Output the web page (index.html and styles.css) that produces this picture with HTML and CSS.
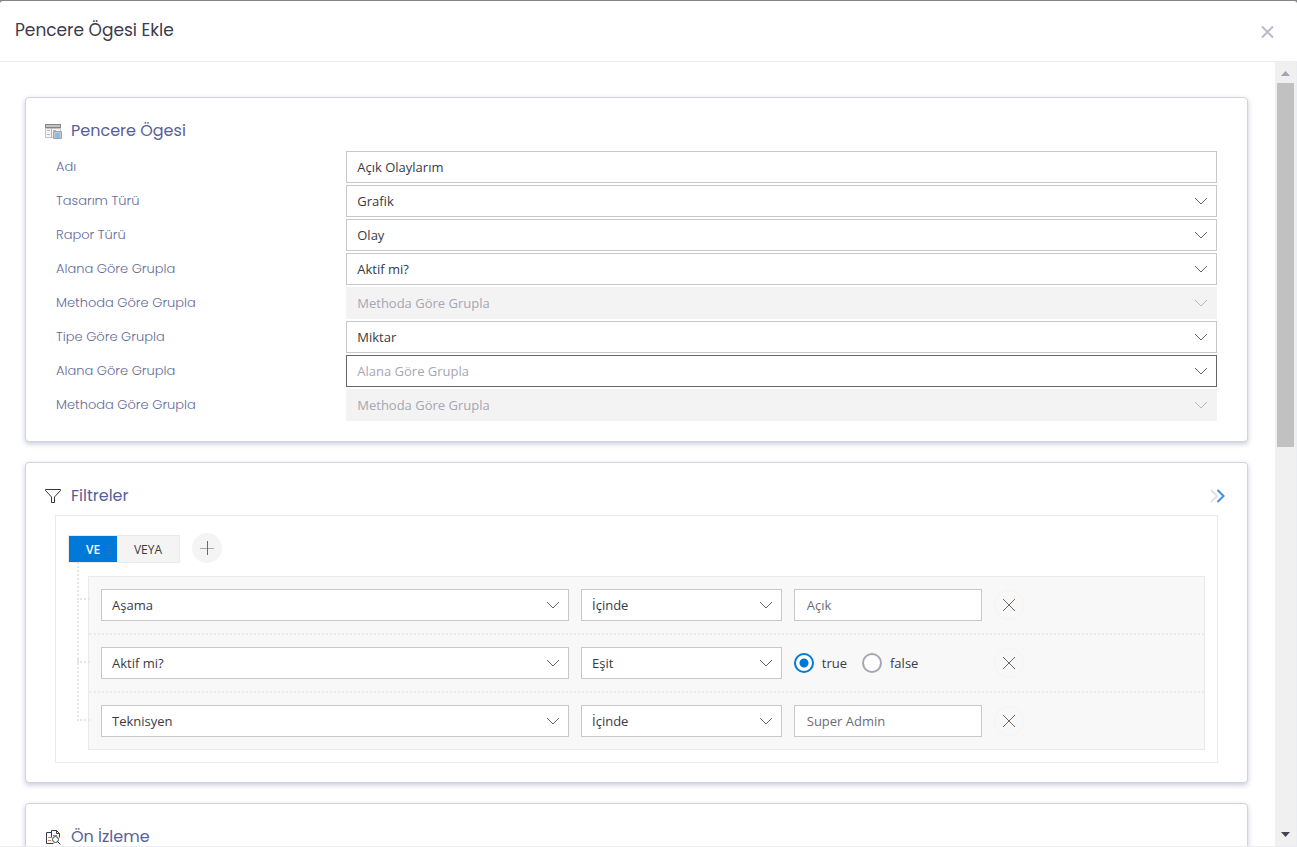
FILE: index.html
```html
<!DOCTYPE html>
<html lang="tr">
<head>
<meta charset="utf-8">
<title>Pencere Ögesi Ekle</title>
<link rel="stylesheet" href="styles.css">
</head>
<body>
<svg class="defs" width="0" height="0" aria-hidden="true">
  <symbol id="chevron" viewBox="0 0 14 8"><path d="M1 1l6 6 6-6" fill="none" stroke="currentColor"/></symbol>
  <symbol id="cross" viewBox="0 0 14 14"><path d="M1 1l12 12M13 1L1 13" fill="none" stroke="currentColor"/></symbol>
</svg>
<div class="dialog" role="dialog" aria-labelledby="dialog-title">
  <header class="dialog-header">
    <h1 class="dialog-title" id="dialog-title">Pencere Ögesi Ekle</h1>
    <button class="close" type="button" aria-label="Kapat"><svg width="13" height="12" viewBox="0 0 13 12"><path d="M1 .5l11 11M12 .5L1 11.500" fill="none" stroke="currentColor" stroke-width="2"/></svg></button>
  </header>
  <div class="dialog-body">
    <main class="content">
      <section class="card">
        <div class="card-head">
          <svg class="card-icon" width="17" height="17" viewBox="0 0 17 17"><path d="M0 1h16v4H0z" fill="#858585"/><path d="M1 2h14v2H1z" fill="#c4c4c4"/><path d="M.5 5.500h15v9H.5z" fill="#f4f4f4" stroke="#c2c2c2"/><path d="M2 7.500h3M2 11.500h3M6.500 6v9M8 7.500h3" stroke="#b4b4b4"/><path d="M8.500 8.500h8v7h-8z" fill="#c9c9c9" stroke="#a3a3a3"/><path d="M10 10h5v5h-5z" fill="#84bdf0"/></svg>
          <h2 class="card-title">Pencere Ögesi</h2>
        </div>
        <div class="form">
          <div class="row"><label for="f1">Adı</label><input class="control" id="f1" type="text" value="Açık Olaylarım"></div>
          <div class="row"><label for="f2">Tasarım Türü</label><div class="pick"><select class="control" id="f2"><option>Grafik</option></select><svg class="chevron"><use href="#chevron"/></svg></div></div>
          <div class="row"><label for="f3">Rapor Türü</label><div class="pick"><select class="control" id="f3"><option>Olay</option></select><svg class="chevron"><use href="#chevron"/></svg></div></div>
          <div class="row"><label for="f4">Alana Göre Grupla</label><div class="pick"><select class="control" id="f4"><option>Aktif mi?</option></select><svg class="chevron"><use href="#chevron"/></svg></div></div>
          <div class="row"><label for="f5">Methoda Göre Grupla</label><div class="pick disabled"><select class="control" id="f5" disabled><option>Methoda Göre Grupla</option></select><svg class="chevron"><use href="#chevron"/></svg></div></div>
          <div class="row"><label for="f6">Tipe Göre Grupla</label><div class="pick"><select class="control" id="f6"><option>Miktar</option></select><svg class="chevron"><use href="#chevron"/></svg></div></div>
          <div class="row"><label for="f7">Alana Göre Grupla</label><div class="pick"><select class="control active" id="f7"><option>Alana Göre Grupla</option></select><svg class="chevron"><use href="#chevron"/></svg></div></div>
          <div class="row"><label for="f8">Methoda Göre Grupla</label><div class="pick disabled"><select class="control" id="f8" disabled><option>Methoda Göre Grupla</option></select><svg class="chevron"><use href="#chevron"/></svg></div></div>
        </div>
      </section>

      <section class="card">
        <div class="card-head">
          <svg class="card-icon" width="17" height="17" viewBox="0 0 17 17"><path d="M.5 1.500h15v1L9.500 9v5.500h-3V9L.5 2.500z" fill="none" stroke="#34343f"/></svg>
          <h2 class="card-title">Filtreler</h2>
          <button class="expand" type="button" aria-label="Genişlet"><svg width="15" height="14" viewBox="0 0 15 14"><path d="M1 1l6 6-6 6" fill="none" stroke="#dfe1ea" stroke-width="2"/><path d="M7.500 1l6 6-6 6" fill="none" stroke="#3f8fda" stroke-width="2"/></svg></button>
        </div>
        <div class="query">
          <div class="query-bar">
            <div class="toggle"><button class="toggle-item on" type="button">VE</button><button class="toggle-item" type="button">VEYA</button></div>
            <button class="round add" type="button" aria-label="Ekle"><svg width="14" height="14" viewBox="0 0 14 14"><path d="M0 7.500h14" stroke="#aaa"/><path d="M7.500 0v14" stroke="#77655b"/></svg></button>
          </div>
          <div class="rules">
            <div class="rule">
              <div class="pick field"><select class="control" aria-label="Alan"><option>Aşama</option></select><svg class="chevron"><use href="#chevron"/></svg></div>
              <div class="pick operator"><select class="control" aria-label="Operatör"><option>İçinde</option></select><svg class="chevron"><use href="#chevron"/></svg></div>
              <input class="control value" type="text" aria-label="Değer" value="Açık">
              <button class="round remove" type="button" aria-label="Sil"><svg width="14" height="14"><use href="#cross"/></svg></button>
            </div>
            <div class="rule">
              <div class="pick field"><select class="control" aria-label="Alan"><option>Aktif mi?</option></select><svg class="chevron"><use href="#chevron"/></svg></div>
              <div class="pick operator"><select class="control" aria-label="Operatör"><option>Eşit</option></select><svg class="chevron"><use href="#chevron"/></svg></div>
              <div class="value radios">
                <label class="radio"><input type="radio" name="active" checked>true</label>
                <label class="radio"><input type="radio" name="active">false</label>
              </div>
              <button class="round remove" type="button" aria-label="Sil"><svg width="14" height="14"><use href="#cross"/></svg></button>
            </div>
            <div class="rule">
              <div class="pick field"><select class="control" aria-label="Alan"><option>Teknisyen</option></select><svg class="chevron"><use href="#chevron"/></svg></div>
              <div class="pick operator"><select class="control" aria-label="Operatör"><option>İçinde</option></select><svg class="chevron"><use href="#chevron"/></svg></div>
              <input class="control value" type="text" aria-label="Değer" value="Super Admin">
              <button class="round remove" type="button" aria-label="Sil"><svg width="14" height="14"><use href="#cross"/></svg></button>
            </div>
          </div>
        </div>
      </section>

      <section class="card">
        <div class="card-head">
          <svg class="card-icon" width="17" height="17" viewBox="0 0 17 17"><g fill="none" stroke="#3c3c46"><path d="M6.500 3.500h-5v11h7M6.500 8.500v-7h5l3 3v4M11.500 1.500v3h3"/><circle cx="10.500" cy="10.500" r="3"/><path d="M12.500 12.500l3 3"/></g><path d="M8 6.500h4M3 8.500h4" stroke="#4d9bdc"/><path d="M3 11.500h3" stroke="#d7805c"/></svg>
          <h2 class="card-title">Ön İzleme</h2>
        </div>
      </section>
    </main>
    <div class="scrollbar" aria-hidden="true">
      <svg class="arrow up" width="9" height="5" viewBox="0 0 9 5"><path d="M0 5h9L4.500 0z" fill="currentColor"/></svg>
      <div class="thumb-track"><div class="thumb"></div></div>
      <svg class="arrow down" width="9" height="5" viewBox="0 0 9 5"><path d="M0 0h9L4.500 5z" fill="currentColor"/></svg>
    </div>
  </div>
</div>
</body>
</html>
```

FILE: styles.css
```css
* { box-sizing: border-box; }

body {
  margin: 0;
  background: #86838a;
  color: #3a3a45;
  font: 13px/20px "Segoe UI", "Open Sans", "Noto Sans", sans-serif;
}

button, input, select { font: inherit; color: inherit; }
button { padding: 0; border: 0; background: none; cursor: pointer; }
svg { display: block; }
.defs { position: absolute; }

.dialog {
  display: flex;
  flex-direction: column;
  height: 100vh;
  padding-top: 1px;
}

.dialog-header {
  display: flex;
  flex: none;
  align-items: center;
  justify-content: space-between;
  height: 61px;
  padding: 0 23px 2px 15px;
  border-bottom: 1px solid #ebedf2;
  border-radius: 3px 3px 0 0;
  background: #fff;
}

.dialog-title, .card-title, .row label {
  margin: 0;
  font-family: "Poppins", "Inter", sans-serif;
}

.dialog-title { font-size: 17px; line-height: 24px; font-weight: 400; color: #3c3a4c; }
.close { padding-top: 4px; color: #b9bbcd; }

.dialog-body {
  display: flex;
  flex: 1;
  min-height: 0;
  border-right: 1px solid #ebedf2;
  border-bottom: 1px solid #ebedf2;
  background: #fff;
}

.content {
  display: flex;
  flex: 1;
  flex-direction: column;
  gap: 20px;
  min-width: 0;
  padding: 35px 27px 0 25px;
  overflow: hidden;
}

.card {
  flex: none;
  padding: 19px;
  border: 1px solid #d0d3e0;
  border-radius: 4px;
  box-shadow: 0 2px 5px rgba(70, 80, 130, .3);
  background: #fff;
}

.card-head { display: flex; align-items: center; height: 28px; }
.card-icon { flex: none; margin-right: 9px; }
.card-title { font-size: 16px; line-height: 20px; font-weight: 400; color: #575f98; }
.expand { margin-left: auto; margin-right: 3px; }

.form { display: flex; flex-direction: column; gap: 2px; padding: 6px 11px 1px; }
.row { display: grid; grid-template-columns: 1fr 3fr; }
.row label { padding-top: 6px; font-size: 13px; font-weight: 300; color: #636b9a; }

.control {
  display: block;
  width: 100%;
  height: 32px;
  padding: 0 10px;
  border: 1px solid #c8c8c8;
  border-radius: 0;
  outline: 0;
  appearance: none;
  background: #fff;
}
.control.active { border-color: #666; color: #a6a6b2; }
.control:disabled { border-color: #f3f3f3; background: #f3f3f3; color: #a6a6b2; opacity: 1; }

.pick { position: relative; }
.chevron {
  position: absolute;
  top: 12px;
  right: 9px;
  width: 14px;
  height: 8px;
  color: #666670;
  pointer-events: none;
}
.disabled .chevron { color: #b6b6bd; }

.query { margin: 5px 10px 0; padding: 17px 12px 12px; border: 1px solid #eaeaea; }
.query-bar { display: flex; gap: 12px; }

.toggle { display: flex; height: 28px; margin-top: 2px; border: 1px solid #eaeaea; background: #f4f4f4; }
.toggle-item { width: 62px; padding-top: 2px; font-size: 12px; font-weight: 500; }
.toggle-item.on { width: 48px; background: #0078d7; color: #fff; font-weight: 600; }

.round { display: grid; flex: none; place-items: center; width: 30px; height: 30px; border-radius: 50%; }
.add { background: #f4f4f4; }
.remove { border: 1px solid #f4f4f4; color: #77675b; }

.rules { margin: 13px 0 0 20px; border: 1px solid #eaeaea; background: #f8f8f8; }

.rule { position: relative; display: flex; align-items: center; gap: 12px; height: 56px; padding: 0 12px; }
.rule + .rule { height: 58px; border-top: 2px dotted #eaeaea; }

/* Connector from the group toggle to each rule */
.rule::before {
  content: "";
  position: absolute;
  bottom: 28px;
  left: -12px;
  width: 11px;
  height: 60px;
  border: dotted #e6e6e6;
  border-width: 0 0 2px 2px;
}
.rule:first-child::before { bottom: 33px; height: 36px; }

.field { flex: 0 0 42.9%; }
.operator { flex: 0 0 18.4%; }
.value { flex: 0 0 188px; color: #6c6c74; }
.value.control { padding: 0 12px; }

.radios { display: flex; gap: 15px; color: #3a3a45; }
.radio { display: flex; align-items: center; gap: 8px; }
.radio input {
  width: 20px;
  height: 20px;
  margin: 0;
  border: 2px solid #a6a6b2;
  border-radius: 50%;
  appearance: none;
  background: #fff;
}
.radio input:checked { border-color: #0078d7; background: radial-gradient(circle, #0078d7 4px, #fff 5px); }

.scrollbar {
  display: flex;
  flex: none;
  flex-direction: column;
  align-items: center;
  width: 21px;
  padding: 9px 0;
  background: #f0f0f0;
}
.thumb-track { flex: 1; margin: 7px 0; }
.thumb { width: 17px; height: 49%; background: #c1c1c1; }
.up { color: #a3a3b3; }
.down { color: #45454f; }
```
